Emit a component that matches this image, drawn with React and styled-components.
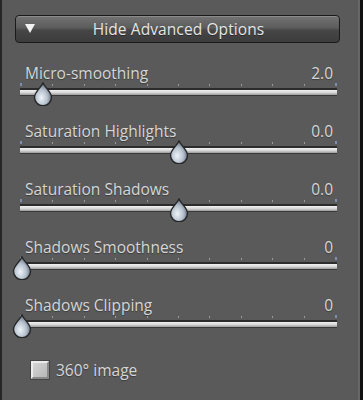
import React from "react"
import styled, { createGlobalStyle } from "styled-components"

const GlobalStyle = createGlobalStyle`
    html, body {
        margin: 0;
        padding: 0;
        background: #5a5a5a;
    }
`

const Panel = styled.div`
    width: 363px;
    height: 400px;
    box-sizing: border-box;
    background: #5a5a5a;
    border-left: 2px solid #262626;
    border-right: 3px solid #111;
    box-shadow: inset -2px 0 0 #676767;
    padding: 15px 0 0 13px;
    display: flex;
    flex-direction: column;
    font-family: "Open Sans", "Liberation Sans", sans-serif;
    overflow: hidden;
`

const ToggleButton = styled.div`
    width: 325px;
    height: 28px;
    box-sizing: border-box;
    border: 1px solid #1a1a1a;
    border-radius: 4px;
    background: linear-gradient(#737373, #5c5c5c 45%, #464646 55%, #3c3c3c);
    box-shadow: inset 0 1px 0 rgba(255,255,255,0.18);
    display: flex;
    align-items: center;
    position: relative;
    color: #e6e6e6;
    font-size: 15.5px;
    letter-spacing: 0.1px;
    justify-content: center;
    text-shadow: 0 1px 0 rgba(0,0,0,0.4);
    padding-left: 2px;
`

const Arrow = styled.span`
    position: absolute;
    left: 9px;
    top: 8px;
    width: 0;
    height: 0;
    border-left: 5px solid transparent;
    border-right: 5px solid transparent;
    border-top: 9px solid #f2f2f2;
`

const Sliders = styled.div`
    margin-top: 21px;
    margin-left: 5px;
    width: 317px;
    display: flex;
    flex-direction: column;
`

const Row = styled.div`
    height: 58px;
    position: relative;
`

const Header = styled.div`
    height: 18px;
    display: flex;
    justify-content: space-between;
    align-items: center;
    padding: 0 4px 0 5px;
    color: #d6d6d6;
    font-size: 15.5px;
    text-shadow: 0 1px 1px rgba(0,0,0,0.35);
`

const Ticks = styled.div`
    margin-top: 1px;
    height: 3px;
    display: flex;
    justify-content: space-between;
    align-items: flex-end;
`

const Tick = styled.span`
    width: ${p => (p.$end ? 2 : 1)}px;
    height: ${p => (p.$end ? 3 : 2)}px;
    background: ${p => (p.$end ? "#7f8db0" : "#9a9a9a")};
`

const Track = styled.div`
    margin-top: 2px;
    height: 8px;
    box-sizing: border-box;
    border-top: 2px solid #2c2c2c;
    border-bottom: 1px solid #383838;
    background: linear-gradient(#f2f2f2, #d8d8d8 50%, #9a9a9a);
`

const Thumb = styled.svg`
    position: absolute;
    top: 18px;
    width: 20px;
    height: 24px;
    margin-left: -10px;
`

const CheckRow = styled.label`
    margin-left: 16px;
    height: 32px;
    display: flex;
    align-items: center;
    gap: 7px;
    color: #d6d6d6;
    font-size: 15.5px;
    text-shadow: 0 1px 1px rgba(0,0,0,0.35);
`

const Box = styled.span`
    width: 18px;
    height: 18px;
    box-sizing: border-box;
    border: 2px solid #ececec;
    border-right-color: #8a8a8a;
    border-bottom-color: #8a8a8a;
    background: linear-gradient(135deg, #d4d4d4, #b8b8b8);
    box-shadow: 0 0 0 1px #444;
`

const sliders = [
    { label: "Micro-smoothing", value: "2.0", f: 0.067 },
    { label: "Saturation Highlights", value: "0.0", f: 0.5 },
    { label: "Saturation Shadows", value: "0.0", f: 0.5 },
    { label: "Shadows Smoothness", value: "0", f: 0 },
    { label: "Shadows Clipping", value: "0", f: 0 },
]

const Drop = () => (
    <>
        <defs>
            <radialGradient id="dropFill" cx="0.4" cy="0.65" r="0.6">
                <stop offset="0" stopColor="#eef3f8" />
                <stop offset="0.6" stopColor="#b4c0cc" />
                <stop offset="1" stopColor="#6c7886" />
            </radialGradient>
        </defs>
        <path
            d="M10 1 C11.5 5 18.5 10 18.5 15.2 A8.5 8.5 0 0 1 1.5 15.2 C1.5 10 8.5 5 10 1 Z"
            fill="url(#dropFill)"
            stroke="#262626"
            strokeWidth="1.4"
        />
    </>
)

const Slider = ({ label, value, f }) => (
    <Row>
        <Header>
            <span>{label}</span>
            <span>{value}</span>
        </Header>
        <Ticks>
            {Array.from({ length: 11 }).map((_, i) => (
                <Tick key={i} $end={i === 0 || i === 10} />
            ))}
        </Ticks>
        <Track />
        <Thumb viewBox="0 0 20 24" style={{ left: 2 + f * 313 }}>
            <Drop />
        </Thumb>
    </Row>
)

export default function App() {
    return (
        <>
            <GlobalStyle />
            <Panel>
                <ToggleButton>
                    <Arrow />
                    Hide Advanced Options
                </ToggleButton>
                <Sliders>
                    {sliders.map(s => (
                        <Slider key={s.label} {...s} />
                    ))}
                </Sliders>
                <CheckRow>
                    <Box />
                    360° image
                </CheckRow>
            </Panel>
        </>
    )
}
